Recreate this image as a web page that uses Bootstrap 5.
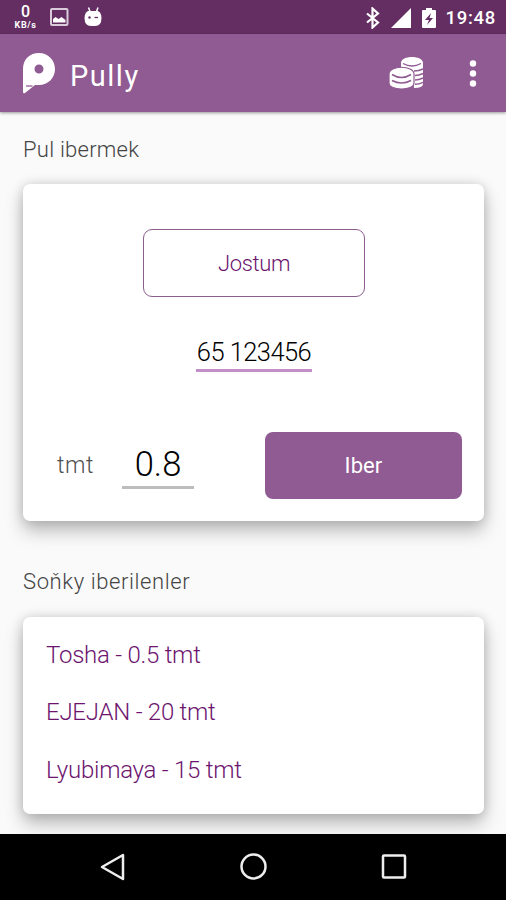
<!DOCTYPE html>
<html lang="tk">
<head>
<meta charset="utf-8">
<meta name="viewport" content="width=device-width, initial-scale=1">
<title>Pully</title>
<link href="https://cdn.jsdelivr.net/npm/bootstrap@5.3.0/dist/css/bootstrap.min.css" rel="stylesheet">
<style>
  body { font-family: Roboto, "Liberation Sans", sans-serif; background: #fafafa; font-weight: 300; }
  .screen { height: 900px; }
  svg { display: block; flex: none; }
  .status-strip { height: 34px; background: #642e62; padding: 0 10px 0 13px; }
  .speed { width: 25px; font-weight: 700; }
  .speed-value { font-size: 16px; line-height: 16px; font-weight: 500; }
  .speed-unit { font-size: 9px; line-height: 10px; letter-spacing: .6px; }
  .icon-picture { margin-left: 8px; }
  .icon-bot { margin-left: 11px; }
  .status-right { gap: 11px; padding-top: 1px; }
  .clock { font-size: 18.5px; font-weight: 500; letter-spacing: .7px; line-height: 22px; margin-left: -1px; }
  .app-bar { height: 78px; background: #905a92; padding: 0 29px 0 22px; box-shadow: 0 1px 3px rgba(0,0,0,.4); z-index: 1; }
  .app-name { font-size: 29px; font-weight: 400; letter-spacing: 1.5px; margin-left: 14px; line-height: 34px; padding-top: 5px; }
  .icon-more { margin-left: 44px; }
  .content-area { padding: 0 22px 0 23px; }
  .section-title { height: 72px; padding-top: 5px; font-size: 22px; font-weight: 300; letter-spacing: .25px; color: #444; }
  .title-recent { height: 96px; padding-top: 26px; letter-spacing: .6px; }
  .panel { border: 0; border-radius: 7px; box-shadow: 0 10px 18px rgba(0,0,0,.25), 0 0 12px rgba(0,0,0,.15); }
  .panel-send { height: 337px; padding: 45px 22px 22px 34px; }
  .btn-friend { width: 222px; height: 68px; margin-left: 86px; border: 1.5px solid #8b5f8d; border-radius: 9px; color: #6c146e; font-size: 22px; font-weight: 300; letter-spacing: -.35px; }
  .phone { width: 116px; height: 43px; margin: 32px 0 0 139px; padding-top: 6px; border-bottom: 3px solid #c28fc9; color: #000; font-size: 25.5px; font-weight: 300; letter-spacing: -.55px; line-height: 34px; white-space: nowrap; }
  .pay-row { height: 67px; }
  .unit-label { width: 38px; padding-top: 2px; font-size: 23px; letter-spacing: .6px; color: #505050; }
  .amount { width: 72px; height: 48px; margin: -2px 0 0 27px; border-bottom: 3px solid #bdbdbd; color: #000; font-size: 34.5px; font-weight: 300; line-height: 46px; }
  .btn-send { width: 197px; height: 67px; border: 0; border-radius: 8px; background: #905a92; color: #fff; font-size: 22px; font-weight: 400; letter-spacing: .1px; }
  .panel-recent { height: 197px; padding: 9px 23px; }
  .recent-row { height: 57.6px; padding: 0; border: 0; background: none; color: #6c146e; font-size: 24px; font-weight: 300; letter-spacing: -.25px; white-space: nowrap; }
  .nav-keys { height: 66px; background: #000; z-index: 1; gap: 113px; }
</style>
</head>
<body>
<div class="screen d-flex flex-column overflow-hidden">
  <div class="status-strip d-flex align-items-center text-white">
    <div class="speed text-center"><div class="speed-value">0</div><div class="speed-unit">KB/s</div></div>
    <svg class="icon-picture" width="26" height="20" viewBox="0 0 26 20"><rect x="5" y="2" width="16.500" height="16" rx="1" fill="none" stroke="#d9cbd9" stroke-width="2"/><path d="M7 15.500V12l2.500-2 3 2 3-2 4 3v2.500z" fill="#fff"/></svg>
    <svg class="icon-bot" width="20" height="22" viewBox="0 0 20 22"><path d="M5.500 1.500l1.500 4M15 1.500l-1.500 4" stroke="#fff" stroke-width="1.500"/><path d="M5 5h10q3.500 2 3.500 7 0 8-6.500 8H8q-6.500 0-6.500-8 0-5 3.500-7z" fill="#fff"/><circle cx="6.500" cy="11.500" r="1.200" fill="#642e62"/><path d="M11.500 11.500h3.500" stroke="#642e62" stroke-width="1.300"/></svg>
    <div class="status-right ms-auto d-flex align-items-center">
      <svg width="14" height="22" viewBox="0 0 14 22"><path d="M1 6.500l11 9-5.500 5V1.500l5.500 5-11 9" fill="none" stroke="#fff" stroke-width="2.200"/></svg>
      <svg width="20" height="20" viewBox="0 0 20 20"><path d="M0 20L20 0v20z" fill="#fff"/></svg>
      <svg width="14" height="22" viewBox="0 0 14 22"><path d="M1 3h3V1h6v2h3q1 0 1 1v16q0 1-1 1H1q-1 0-1-1V4q0-1 1-1z" fill="#fff"/><path d="M9 6l-6 7h4l-2 5 6-7H7.500z" fill="#642e62"/></svg>
      <div class="clock">19:48</div>
    </div>
  </div>
  <header class="app-bar d-flex align-items-center text-white position-relative">
    <svg width="34" height="44" viewBox="0 0 34 44"><path fill="#fff" fill-rule="evenodd" d="M1 18C1 8 8 2 17 2s16 7 16 16-7 16-16 16h-4L3 42q-2 1-2-1zM17 13.500a4.500 4.500 0 1 0 0 9 4.500 4.500 0 0 0 0-9z"/><path d="M4 35h6.500" stroke="#905a92" stroke-width="1.300"/></svg>
    <div class="app-name">Pully</div>
    <svg class="ms-auto" width="36" height="36" viewBox="0 0 36 36"><path d="M12 8C12 0 34 0 34 8v21q0 4-9 4l-1-17q-3-3-12-3z" fill="#fff"/><path d="M14 8.500q9 5 18 0M25 16q5 0 9-2M26 20.500q4 0 8-2M26 25q4 0 8-2M26 29.300q4 0 8-2" fill="none" stroke="#905a92" stroke-width="1.400"/><path d="M0 19C0 10 25 10 25 19v9c0 8-25 8-25 0z" fill="#fff" stroke="#905a92" stroke-width="1.200"/><path d="M3 19.500q9.500 6 19 0M3 25.500q9.500 5 19 0" fill="none" stroke="#905a92" stroke-width="1.500"/></svg>
    <svg class="icon-more" width="8" height="28" viewBox="0 0 8 28"><g fill="#fff"><circle cx="4" cy="4.500" r="3.200"/><circle cx="4" cy="14.500" r="3.200"/><circle cx="4" cy="24.500" r="3.200"/></g></svg>
  </header>
  <main class="content-area flex-grow-1">
    <h2 class="section-title d-flex align-items-center m-0">Pul ibermek</h2>
    <section class="card panel panel-send">
      <button class="btn btn-friend">Jostum</button>
      <div class="phone text-center">65 123456</div>
      <div class="pay-row d-flex align-items-center mt-auto">
        <span class="unit-label">tmt</span>
        <div class="amount text-center">0.8</div>
        <button class="btn btn-send ms-auto">Iber</button>
      </div>
    </section>
    <h2 class="section-title title-recent d-flex align-items-center m-0">Soňky iberilenler</h2>
    <section class="card panel panel-recent">
      <ul class="list-group list-group-flush">
        <li class="list-group-item recent-row d-flex align-items-center">Tosha - 0.5 tmt</li>
        <li class="list-group-item recent-row d-flex align-items-center">EJEJAN - 20 tmt</li>
        <li class="list-group-item recent-row d-flex align-items-center">Lyubimaya - 15 tmt</li>
      </ul>
    </section>
  </main>
  <footer class="nav-keys position-relative d-flex justify-content-center align-items-center">
    <svg width="28" height="28" viewBox="0 0 28 28"><path d="M4 14L25 2v24z" fill="none" stroke="#eee" stroke-width="2.500" stroke-linejoin="round"/></svg>
    <svg width="28" height="28" viewBox="0 0 28 28"><circle cx="14.500" cy="13.500" r="12" fill="none" stroke="#eee" stroke-width="2.500"/></svg>
    <svg width="28" height="28" viewBox="0 0 28 28"><rect x="3" y="2.500" width="22" height="22" rx="1" fill="none" stroke="#eee" stroke-width="2.500"/></svg>
  </footer>
</div>
<script src="https://cdn.jsdelivr.net/npm/bootstrap@5.3.0/dist/js/bootstrap.bundle.min.js"></script>
</body>
</html>
